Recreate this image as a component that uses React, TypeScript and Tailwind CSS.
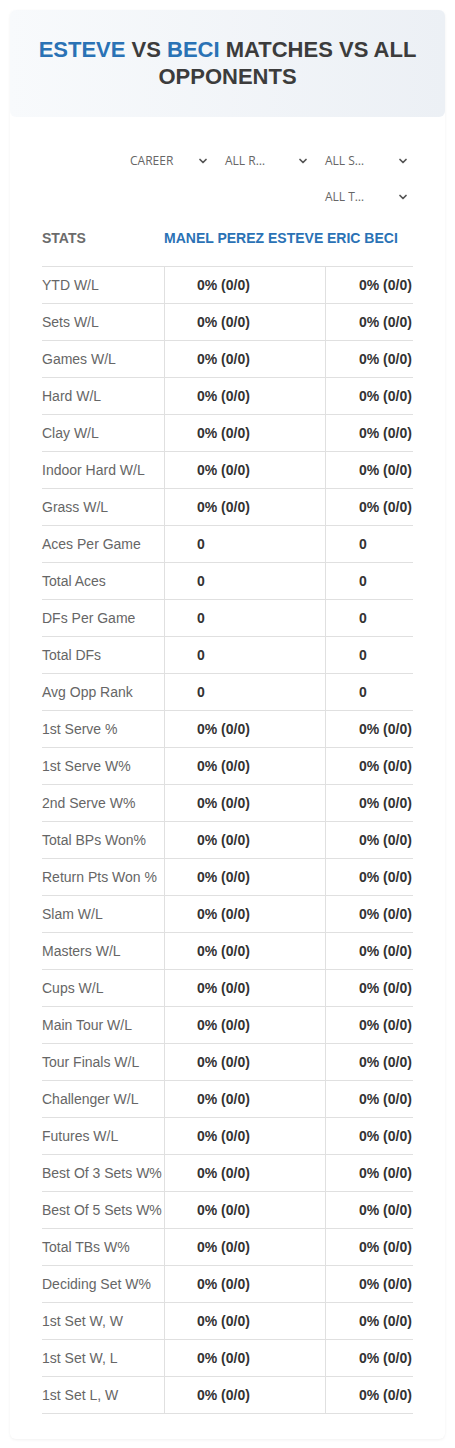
import { ChevronDown } from 'lucide-react';

type Row = { label: string; a: string; b: string };

const pct = '0% (0/0)';

const rows: Row[] = [
  { label: 'YTD W/L', a: pct, b: pct },
  { label: 'Sets W/L', a: pct, b: pct },
  { label: 'Games W/L', a: pct, b: pct },
  { label: 'Hard W/L', a: pct, b: pct },
  { label: 'Clay W/L', a: pct, b: pct },
  { label: 'Indoor Hard W/L', a: pct, b: pct },
  { label: 'Grass W/L', a: pct, b: pct },
  { label: 'Aces Per Game', a: '0', b: '0' },
  { label: 'Total Aces', a: '0', b: '0' },
  { label: 'DFs Per Game', a: '0', b: '0' },
  { label: 'Total DFs', a: '0', b: '0' },
  { label: 'Avg Opp Rank', a: '0', b: '0' },
  { label: '1st Serve %', a: pct, b: pct },
  { label: '1st Serve W%', a: pct, b: pct },
  { label: '2nd Serve W%', a: pct, b: pct },
  { label: 'Total BPs Won%', a: pct, b: pct },
  { label: 'Return Pts Won %', a: pct, b: pct },
  { label: 'Slam W/L', a: pct, b: pct },
  { label: 'Masters W/L', a: pct, b: pct },
  { label: 'Cups W/L', a: pct, b: pct },
  { label: 'Main Tour W/L', a: pct, b: pct },
  { label: 'Tour Finals W/L', a: pct, b: pct },
  { label: 'Challenger W/L', a: pct, b: pct },
  { label: 'Futures W/L', a: pct, b: pct },
  { label: 'Best Of 3 Sets W%', a: pct, b: pct },
  { label: 'Best Of 5 Sets W%', a: pct, b: pct },
  { label: 'Total TBs W%', a: pct, b: pct },
  { label: 'Deciding Set W%', a: pct, b: pct },
  { label: '1st Set W, W', a: pct, b: pct },
  { label: '1st Set W, L', a: pct, b: pct },
  { label: '1st Set L, W', a: pct, b: pct },
];

const filters = [
  { label: 'CAREER', width: 'w-[95px]' },
  { label: 'ALL R…', width: 'w-[100px]' },
  { label: 'ALL S…', width: 'w-[100px]' },
  { label: 'ALL T…', width: 'w-[100px]' },
];

export default function App() {
  return (
    <div className="min-h-[1448px] bg-white px-[10px] pt-[10px] font-['Liberation_Sans']">
      <div className="rounded-md bg-white pb-[25px] shadow-[0_1px_3px_rgba(0,0,0,0.06)]">
        <div className="rounded-md bg-gradient-to-r from-[#f8fafc] to-[#ecf0f5] px-4 pb-[27px] pt-[26px] text-center">
          <h1 className="font-['Liberation_Sans'] text-[22px] font-bold uppercase leading-[27px] text-[#3c3c3c]">
            <span className="text-[#2a72b5]">Esteve</span> vs{' '}
            <span className="text-[#2a72b5]">Beci</span> Matches vs All Opponents
          </h1>
        </div>

        <div className="px-8">
          <div className="mr-[-2px] mt-[29px] flex flex-wrap justify-end gap-y-[6px]">
            {filters.map((f) => (
              <div
                key={f.label}
                className={`flex h-[30px] items-center justify-between pl-[10px] pr-[6px] ${f.width}`}
              >
                <span className="font-['Open_Sans'] text-[12px] text-[#666]">{f.label}</span>
                <ChevronDown className="h-[12px] w-[12px] text-[#555]" strokeWidth={3.5} />
              </div>
            ))}
          </div>

          <div className="font-['Liberation_Sans'] text-[14px]">
            <div className="flex h-[55px] items-center border-b border-[#e0e0e0] pb-[2px] font-bold">
              <div className="w-[122px] text-[#6b6b6b]">STATS</div>
              <div className="w-[161px] whitespace-nowrap text-[#2a72b5]">MANEL PEREZ ESTEVE</div>
              <div className="w-[88px] whitespace-nowrap pl-[2px] text-[#2a72b5]">ERIC BECI</div>
            </div>
            {rows.map((r) => (
              <div key={r.label} className="flex h-[37px] border-b border-[#e0e0e0]">
                <div className="flex w-[122px] items-center whitespace-nowrap text-[#666]">{r.label}</div>
                <div className="flex w-[161px] items-center border-l border-[#e0e0e0] pl-[32px] font-bold text-[#333]">
                  {r.a}
                </div>
                <div className="flex w-[88px] items-center whitespace-nowrap border-l border-[#e0e0e0] pl-[33px] font-bold text-[#333]">
                  {r.b}
                </div>
              </div>
            ))}
          </div>
        </div>
      </div>
    </div>
  );
}
